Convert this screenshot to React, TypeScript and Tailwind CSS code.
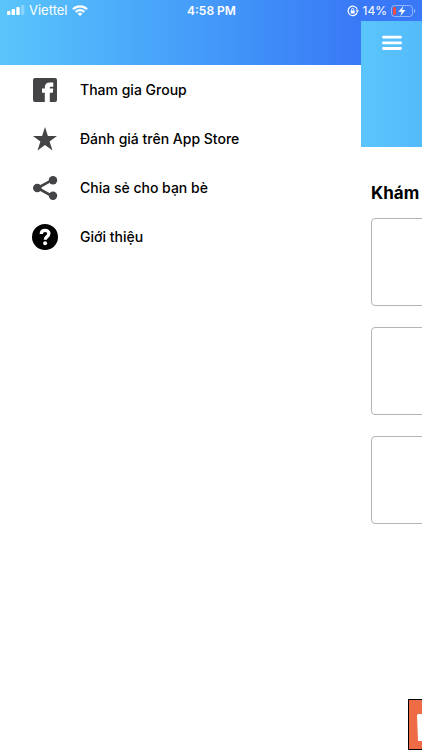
import { useState } from "react";
import type { ReactNode } from "react";

const FacebookIcon = () => (
  <svg viewBox="0 0 24 24" className="size-6" fill="#444446" aria-hidden="true">
    <rect width="24" height="24" rx="2" />
    <path
      fill="#fff"
      d="M20.300 4.600h-3.500c-3.300 0-5 1.900-5 5v.9H9v4.200h2.800V24h5v-9.300h3l.5-4.200h-3.500v-.6c0-.9.4-1.200 1.300-1.200h2.200Z"
    />
  </svg>
);

const StarIcon = () => (
  <svg viewBox="0 0 24 24" className="size-6" fill="#444446" aria-hidden="true">
    <path d="M12 0l2.900 9.100H24l-7.400 5.400 2.900 9.100L12 18l-7.500 5.600 2.900-9.100L0 9.100h9.100Z" />
  </svg>
);

const ShareIcon = () => (
  <svg viewBox="0 0 26 24" className="h-6 w-[26px]" fill="#444446" aria-hidden="true">
    <path d="M20 4.200 5.500 12 20 20" fill="none" stroke="#444446" strokeWidth="2.600" />
    <circle cx="5.300" cy="12" r="4.300" />
    <circle cx="21" cy="4.300" r="4.200" />
    <circle cx="21" cy="19.700" r="4.200" />
  </svg>
);

const HelpIcon = () => (
  <svg viewBox="0 0 26 26" className="size-[26px]" aria-hidden="true">
    <circle cx="13" cy="13" r="13" fill="#000" />
    <path
      d="M9.200 10C9.300 7.700 10.800 6.400 13.100 6.400c2.200 0 3.800 1.300 3.800 3.200 0 1.500-.8 2.200-1.800 3-1.200.9-1.900 1.500-1.900 3.200"
      fill="none"
      stroke="#fff"
      strokeWidth="3.300"
    />
    <circle cx="13.100" cy="19.300" r="2" fill="#fff" />
  </svg>
);

const menu: { label: string; href: string; icon: ReactNode }[] = [
  { label: "Tham gia Group", href: "#group", icon: <FacebookIcon /> },
  { label: "Đánh giá trên App Store", href: "#rate", icon: <StarIcon /> },
  { label: "Chia sẻ cho bạn bè", href: "#share", icon: <ShareIcon /> },
  { label: "Giới thiệu", href: "#about", icon: <HelpIcon /> },
];

function StatusBar() {
  return (
    <div className="grid h-[21px] grid-cols-3 items-center bg-linear-to-r from-[#5ac5fb] to-[#3978f6] to-[calc(100%-61px)] pr-[6px] pl-[7px] text-xs text-white">
      <div className="flex items-center gap-1">
        <svg viewBox="0 0 18 10" className="h-[10px] w-[18px]" fill="#fff" aria-hidden="true">
          <rect x="0" y="6" width="3.400" height="4" rx="0.800" />
          <rect x="4.600" y="4" width="3.400" height="6" rx="0.800" />
          <rect x="9.300" y="2" width="3.400" height="8" rx="0.800" />
          <rect x="14" y="0" width="3.400" height="10" rx="0.800" opacity="0.300" />
        </svg>
        <span className="text-[13px]">Viettel</span>
        <svg viewBox="0 0 16 11" className="h-[11px] w-4" aria-hidden="true">
          <g fill="none" stroke="#fff" strokeWidth="2.200">
            <path d="M1 4.200a10 10 0 0 1 14 0" />
            <path d="M3.700 6.900a6.200 6.200 0 0 1 8.600 0" />
          </g>
          <path d="M8 11 5.600 8.700a3.400 3.400 0 0 1 4.800 0Z" fill="#fff" />
        </svg>
      </div>
      <time className="text-center font-semibold">4:58 PM</time>
      <div className="flex items-center justify-end gap-1">
        <svg viewBox="0 0 12 12" className="size-3" fill="none" stroke="#fff" aria-hidden="true">
          <path d="M10.200 7.500A4.700 4.700 0 1 1 10.300 4.600" strokeWidth="1.200" />
          <path d="M8.600 5.200h3.400l-1.600 2.300Z" fill="#fff" stroke="none" />
          <rect x="3.700" y="5.400" width="4" height="3" rx="0.500" fill="#fff" stroke="none" />
          <path d="M4.500 5.600V4.700a1.200 1.200 0 0 1 2.400 0v.9" strokeWidth="0.900" />
        </svg>
        <span>14%</span>
        <svg viewBox="0 0 25 12" className="h-3 w-[25px]" aria-hidden="true">
          <rect x="0.500" y="0.500" width="21" height="11" rx="3" fill="none" stroke="#fff" strokeOpacity="0.450" />
          <rect x="2" y="2" width="3" height="8" rx="1.200" fill="#ee4b42" />
          <path d="M12.600 0.800 7.500 6.800h3.200L9.300 11.200l5.200-6.100h-3.300Z" fill="#fff" />
          <path d="M23 4v4a2.200 2.200 0 0 0 0-4Z" fill="#fff" fillOpacity="0.500" />
        </svg>
      </div>
    </div>
  );
}

function Drawer() {
  return (
    <aside className="w-[calc(100%-61px)] shrink-0 bg-white">
      <div className="h-[44px] bg-linear-to-r from-[#5ac5fb] to-[#3978f6]" />
      <nav className="flex flex-col">
        {menu.map((item) => (
          <a key={item.href} href={item.href} className="flex h-[49px] items-center gap-[22px] pl-8 text-sm font-medium text-black">
            <span className="flex w-[26px] justify-center">{item.icon}</span>
            {item.label}
          </a>
        ))}
      </nav>
    </aside>
  );
}

export default function App() {
  const [open, setOpen] = useState(true);

  return (
    <div className="flex min-h-screen flex-col overflow-hidden bg-white font-['Inter','Liberation_Sans',sans-serif]">
      <StatusBar />
      <div className="flex flex-1">
        {open && <Drawer />}

        <main className="flex w-full shrink-0 flex-col">
          <header className="flex h-[126px] items-start bg-linear-to-r from-[#5ac5fb] to-[#3978f6] px-5 pt-[10px]">
            <button type="button" aria-label="Menu" aria-expanded={open} onClick={() => setOpen((v) => !v)}>
              <svg viewBox="0 0 22 24" className="h-6 w-[22px]" stroke="#fff" strokeWidth="2.800" strokeLinecap="round" aria-hidden="true">
                <path d="M2.500 6.200h17M2.500 11.900h17M2.500 17.500h17" />
              </svg>
            </button>
          </header>

          <section className="flex flex-col px-[10px] pt-8">
            <h2 className="mb-[11px] text-[17px] leading-7 font-bold text-black">Khám</h2>
            <div className="flex flex-col gap-[21px]">
              <div className="h-[88px] rounded-sm border border-[#b4b4b4]" />
              <div className="h-[88px] rounded-sm border border-[#b4b4b4]" />
              <div className="h-[88px] rounded-sm border border-[#b4b4b4]" />
            </div>
          </section>

          {/* bottom banner */}
          <div className="mx-[47px] mt-auto flex h-[51px] items-center border border-black bg-[#ee6c45] pl-2">
            <svg viewBox="0 0 32 32" className="size-8" fill="#fff" aria-hidden="true">
              <path d="M0 6.500Q0 5 1.500 5h29Q32 5 32 6.500l-1 25Q31 33 29.500 33h-27Q1 33 1 31.500Z" />
            </svg>
          </div>
        </main>
      </div>
    </div>
  );
}
